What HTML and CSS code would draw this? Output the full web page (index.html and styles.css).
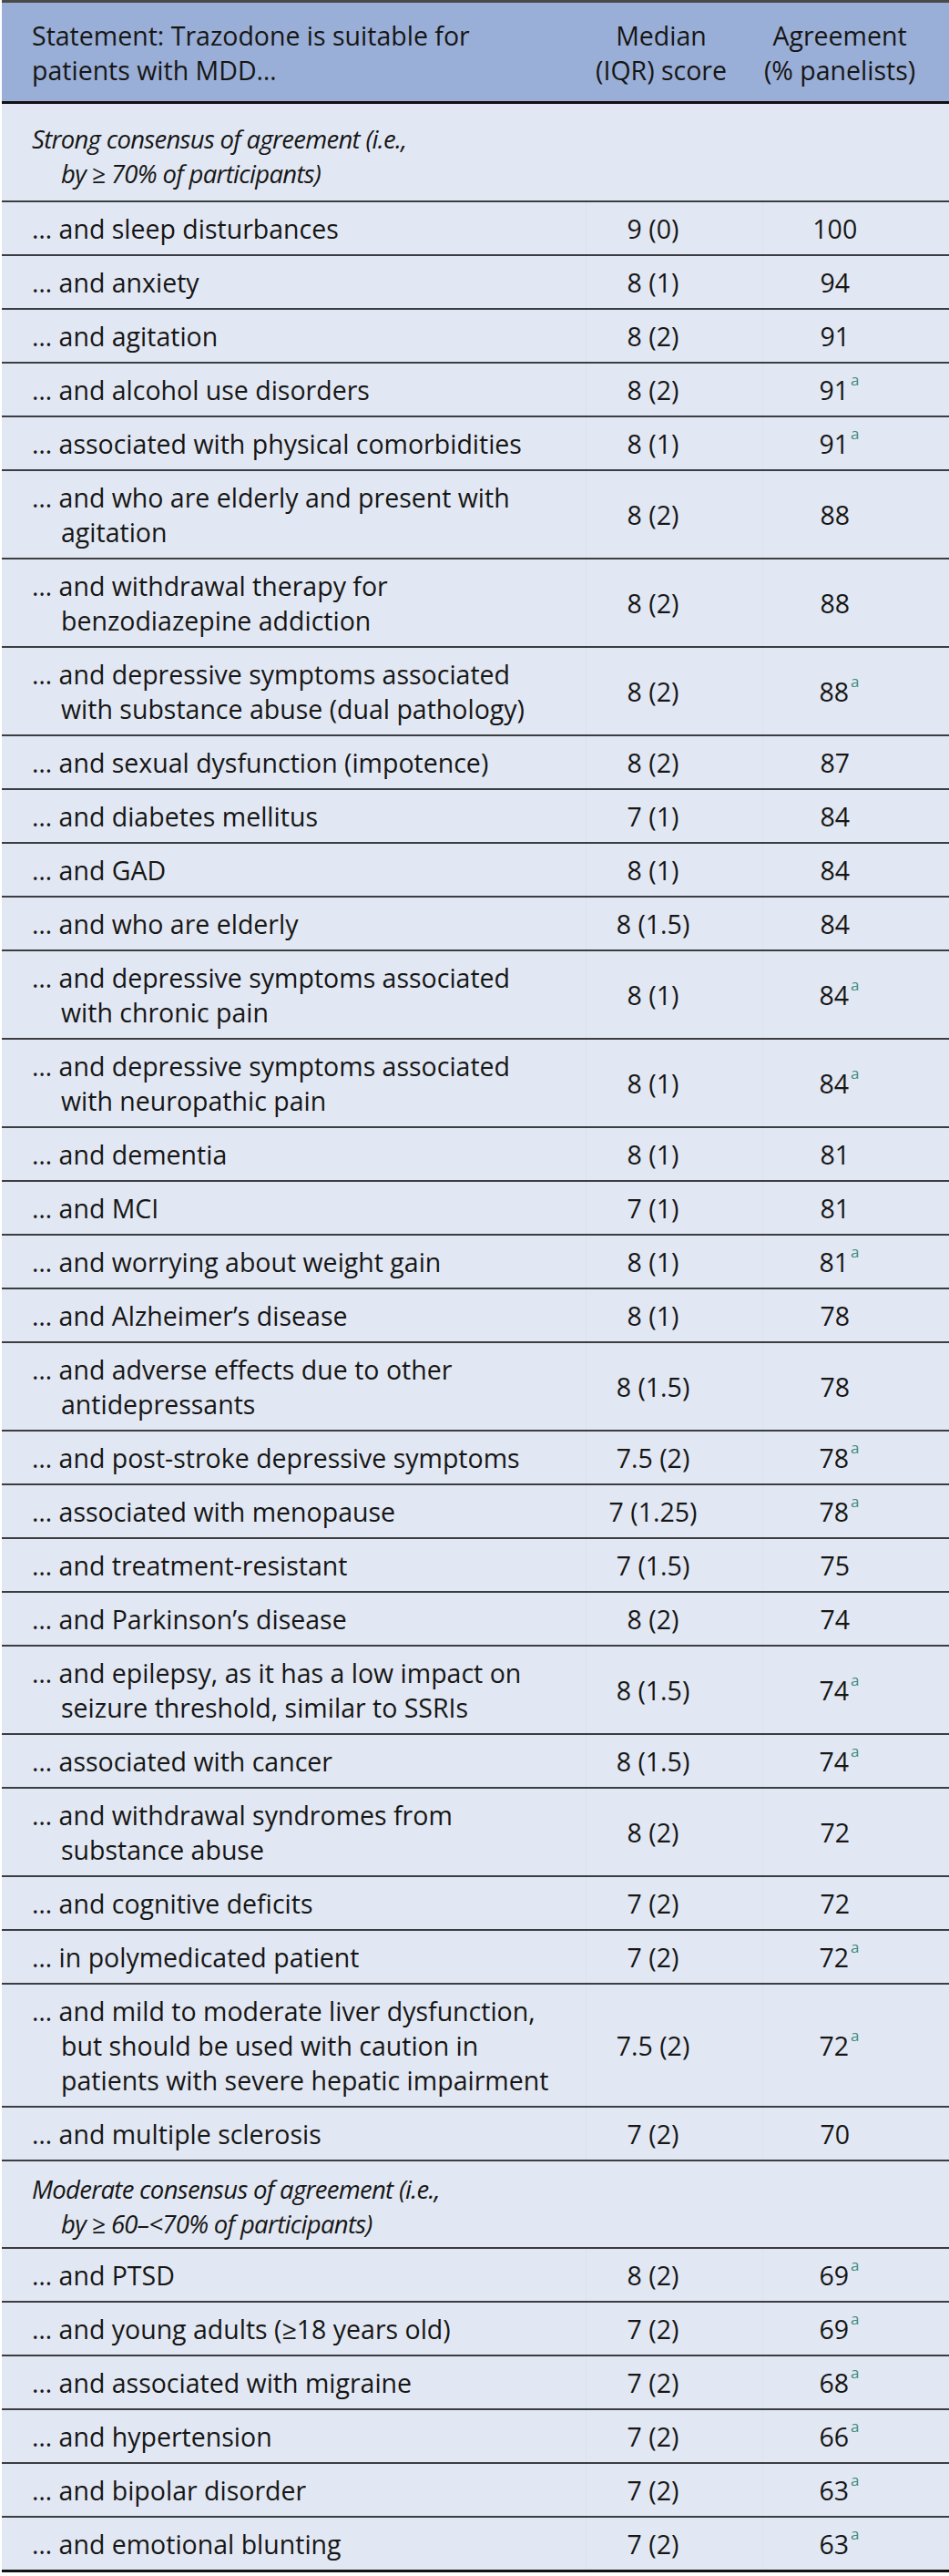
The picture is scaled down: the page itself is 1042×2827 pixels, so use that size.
FILE: index.html
```html
<!DOCTYPE html>
<html lang="en">
<head>
<meta charset="utf-8">
<title>Trazodone consensus table</title>
<link rel="stylesheet" href="styles.css">
</head>
<body>
<table class="consensus">
  <colgroup>
    <col class="c-stmt">
    <col class="c-med">
    <col class="c-agr">
  </colgroup>
  <thead>
    <tr>
      <th class="h-stmt">Statement: Trazodone is suitable for<br>patients with MDD…</th>
      <th class="h-med">Median<br>(IQR) score</th>
      <th class="h-agr">Agreement<br>(% panelists)</th>
    </tr>
  </thead>
  <tbody>
    <tr class="section first">
      <td colspan="3">Strong consensus of agreement (i.e.,<br>by ≥ 70% of participants)</td>
    </tr>
    <tr><td class="stmt">… and sleep disturbances</td><td class="med">9 (0)</td><td class="agr">100</td></tr>
    <tr><td class="stmt">… and anxiety</td><td class="med">8 (1)</td><td class="agr">94</td></tr>
    <tr><td class="stmt">… and agitation</td><td class="med">8 (2)</td><td class="agr">91</td></tr>
    <tr><td class="stmt">… and alcohol use disorders</td><td class="med">8 (2)</td><td class="agr">91<span class="sup">a</span></td></tr>
    <tr><td class="stmt">… associated with physical comorbidities</td><td class="med">8 (1)</td><td class="agr">91<span class="sup">a</span></td></tr>
    <tr><td class="stmt">… and who are elderly and present with<br>agitation</td><td class="med">8 (2)</td><td class="agr">88</td></tr>
    <tr><td class="stmt">… and withdrawal therapy for<br>benzodiazepine addiction</td><td class="med">8 (2)</td><td class="agr">88</td></tr>
    <tr><td class="stmt">… and depressive symptoms associated<br>with substance abuse (dual pathology)</td><td class="med">8 (2)</td><td class="agr">88<span class="sup">a</span></td></tr>
    <tr><td class="stmt">… and sexual dysfunction (impotence)</td><td class="med">8 (2)</td><td class="agr">87</td></tr>
    <tr><td class="stmt">… and diabetes mellitus</td><td class="med">7 (1)</td><td class="agr">84</td></tr>
    <tr><td class="stmt">… and GAD</td><td class="med">8 (1)</td><td class="agr">84</td></tr>
    <tr><td class="stmt">… and who are elderly</td><td class="med">8 (1.5)</td><td class="agr">84</td></tr>
    <tr><td class="stmt">… and depressive symptoms associated<br>with chronic pain</td><td class="med">8 (1)</td><td class="agr">84<span class="sup">a</span></td></tr>
    <tr><td class="stmt">… and depressive symptoms associated<br>with neuropathic pain</td><td class="med">8 (1)</td><td class="agr">84<span class="sup">a</span></td></tr>
    <tr><td class="stmt">… and dementia</td><td class="med">8 (1)</td><td class="agr">81</td></tr>
    <tr><td class="stmt">… and MCI</td><td class="med">7 (1)</td><td class="agr">81</td></tr>
    <tr><td class="stmt">… and worrying about weight gain</td><td class="med">8 (1)</td><td class="agr">81<span class="sup">a</span></td></tr>
    <tr><td class="stmt">… and Alzheimer’s disease</td><td class="med">8 (1)</td><td class="agr">78</td></tr>
    <tr><td class="stmt">… and adverse effects due to other<br>antidepressants</td><td class="med">8 (1.5)</td><td class="agr">78</td></tr>
    <tr><td class="stmt">… and post-stroke depressive symptoms</td><td class="med">7.5 (2)</td><td class="agr">78<span class="sup">a</span></td></tr>
    <tr><td class="stmt">… associated with menopause</td><td class="med">7 (1.25)</td><td class="agr">78<span class="sup">a</span></td></tr>
    <tr><td class="stmt">… and treatment-resistant</td><td class="med">7 (1.5)</td><td class="agr">75</td></tr>
    <tr><td class="stmt">… and Parkinson’s disease</td><td class="med">8 (2)</td><td class="agr">74</td></tr>
    <tr><td class="stmt">… and epilepsy, as it has a low impact on<br>seizure threshold, similar to SSRIs</td><td class="med">8 (1.5)</td><td class="agr">74<span class="sup">a</span></td></tr>
    <tr><td class="stmt">… associated with cancer</td><td class="med">8 (1.5)</td><td class="agr">74<span class="sup">a</span></td></tr>
    <tr><td class="stmt">… and withdrawal syndromes from<br>substance abuse</td><td class="med">8 (2)</td><td class="agr">72</td></tr>
    <tr><td class="stmt">… and cognitive deficits</td><td class="med">7 (2)</td><td class="agr">72</td></tr>
    <tr><td class="stmt">… in polymedicated patient</td><td class="med">7 (2)</td><td class="agr">72<span class="sup">a</span></td></tr>
    <tr><td class="stmt">… and mild to moderate liver dysfunction,<br>but should be used with caution in<br>patients with severe hepatic impairment</td><td class="med">7.5 (2)</td><td class="agr">72<span class="sup">a</span></td></tr>
    <tr><td class="stmt">… and multiple sclerosis</td><td class="med">7 (2)</td><td class="agr">70</td></tr>
    <tr class="section">
      <td colspan="3">Moderate consensus of agreement (i.e.,<br>by ≥ 60–&lt;70% of participants)</td>
    </tr>
    <tr><td class="stmt">… and PTSD</td><td class="med">8 (2)</td><td class="agr">69<span class="sup">a</span></td></tr>
    <tr><td class="stmt">… and young adults (≥18 years old)</td><td class="med">7 (2)</td><td class="agr">69<span class="sup">a</span></td></tr>
    <tr><td class="stmt">… and associated with migraine</td><td class="med">7 (2)</td><td class="agr">68<span class="sup">a</span></td></tr>
    <tr><td class="stmt">… and hypertension</td><td class="med">7 (2)</td><td class="agr">66<span class="sup">a</span></td></tr>
    <tr><td class="stmt">… and bipolar disorder</td><td class="med">7 (2)</td><td class="agr">63<span class="sup">a</span></td></tr>
    <tr class="last"><td class="stmt">… and emotional blunting</td><td class="med">7 (2)</td><td class="agr">63<span class="sup">a</span></td></tr>
  </tbody>
</table>
</body>
</html>
```
FILE: styles.css
```css
html, body {
  margin: 0;
  padding: 0;
  background: #ffffff;
}

body {
  padding-left: 2px;
  font-family: "Open Sans", "Liberation Sans", sans-serif;
  font-size: 28.5px;
  color: #161616;
}

.consensus {
  width: 1040px;
  border-collapse: collapse;
  table-layout: fixed;
  background: #e2e8f3;
  border-top: 3px solid #4a4a4a;
  line-height: 38px;
}

.c-stmt { width: 641px; }
.c-med { width: 194px; }
.c-agr { width: 205px; }

.consensus th,
.consensus td {
  white-space: nowrap;
}

.consensus thead th {
  background: #9aafd7;
  font-weight: normal;
  padding: 17px 0 15px;
  border-bottom: 3px solid #111111;
  vertical-align: top;
}

.consensus thead th.h-stmt {
  text-align: left;
  padding-left: 33px;
}

.consensus thead th.h-med {
  text-align: center;
  padding-right: 28px;
}

.consensus thead th.h-agr {
  text-align: center;
  padding-right: 35px;
}

.consensus tbody td {
  padding: 10px 0 9px;
  border-bottom: 2px solid #3b3d42;
  vertical-align: middle;
}

.consensus tbody td.stmt {
  padding-left: 65px;
  text-indent: -32px;
}

.consensus tbody td.med,
.consensus tbody td.agr {
  text-align: center;
  padding-right: 46px;
  border-left: 1px solid #dbe1ed;
}

.consensus tbody tr.section td {
  font-style: italic;
  font-size: 27.5px;
  letter-spacing: -0.7px;
  padding: 12px 0 6px 65px;
  text-indent: -32px;
}

.consensus tbody tr.section.first td {
  padding-top: 20px;
  padding-bottom: 10px;
}

.consensus tbody tr.last td {
  border-bottom: 3px solid #111111;
}

.sup {
  display: inline-block;
  width: 0;
  margin-left: 2px;
  font-size: 17px;
  line-height: 0;
  color: #3d8a82;
  vertical-align: 16px;
}
```
